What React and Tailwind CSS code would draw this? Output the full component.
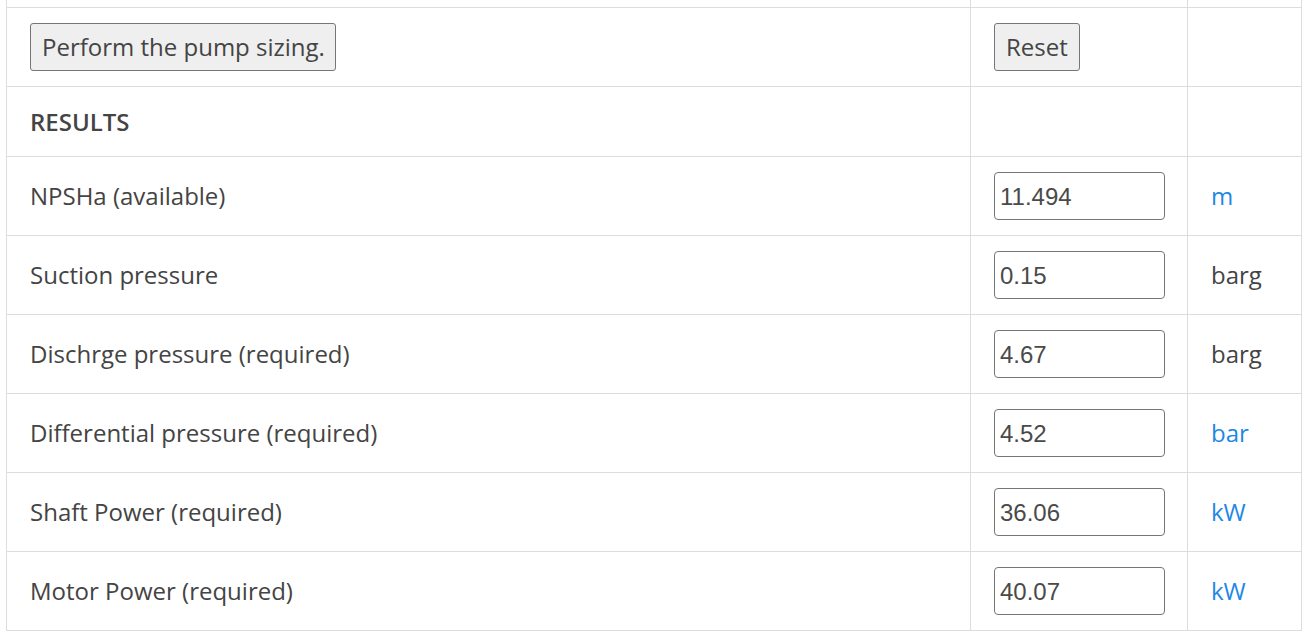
const ROWS = [
  { label: 'NPSHa (available)', value: '11.494', unit: 'm', blue: true },
  { label: 'Suction pressure', value: '0.15', unit: 'barg', blue: false },
  { label: 'Dischrge pressure (required)', value: '4.67', unit: 'barg', blue: false },
  { label: 'Differential pressure (required)', value: '4.52', unit: 'bar', blue: true },
  { label: 'Shaft Power (required)', value: '36.06', unit: 'kW', blue: true },
  { label: 'Motor Power (required)', value: '40.07', unit: 'kW', blue: true },
];

const cell = 'border border-[#dddddd] px-[23px] align-middle';
const btn = 'h-[48px] px-[11px] bg-[#efefef] border border-[#767676] rounded-[3px] text-[24px] text-[#444444] leading-none';

export default function App() {
  return (
    <div className="bg-white min-h-screen pl-[6px] w-[1311px] overflow-hidden" style={{ fontFamily: '"Open Sans", sans-serif' }}>
      <table className="border-collapse w-[1295px] text-[24px] text-[#444444] table-fixed">
        <colgroup>
          <col className="w-[964px]" />
          <col className="w-[217px]" />
          <col className="w-[114px]" />
        </colgroup>
        <tbody>
          <tr className="h-[7px]">
            <td className="border-x border-b border-[#dddddd] p-0" />
            <td className="border-x border-b border-[#dddddd] p-0" />
            <td className="border-x border-b border-[#dddddd] p-0" />
          </tr>
          <tr className="h-[79px]">
            <td className={cell}>
              <button className={`${btn} pr-[10px]`}>Perform the pump sizing.</button>
            </td>
            <td className={cell}>
              <button className={btn}>Reset</button>
            </td>
            <td className={cell} />
          </tr>
          <tr className="h-[70px]">
            <td className={`${cell} font-semibold pt-[2px]`}>RESULTS</td>
            <td className={cell} />
            <td className={cell} />
          </tr>
          {ROWS.map((r) => (
            <tr key={r.label} className="h-[79px]">
              <td className={cell}>{r.label}</td>
              <td className={cell}>
                <input
                  readOnly
                  value={r.value}
                  className="w-[171px] h-[48px] border border-[#767676] rounded-[4px] px-[5px] pt-[2px] text-[24px] text-[#4a4a4a] outline-none"
                  style={{ fontFamily: '"Liberation Sans", Arial, sans-serif' }}
                />
              </td>
              <td className={`${cell} ${r.blue ? 'text-[#1e88e5]' : 'text-[#444444]'}`}>{r.unit}</td>
            </tr>
          ))}
        </tbody>
      </table>
    </div>
  );
}
